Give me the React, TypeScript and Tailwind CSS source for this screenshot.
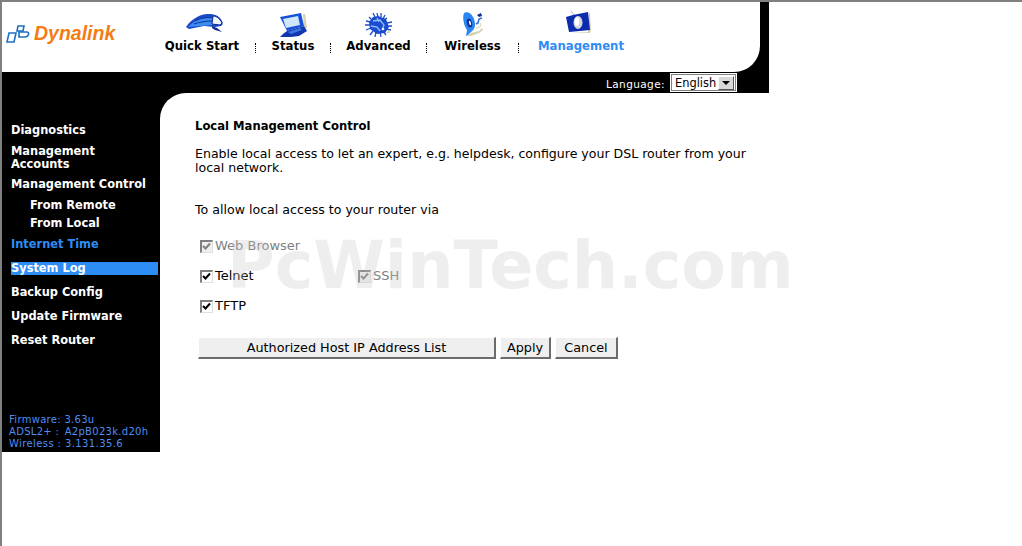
import { FunctionComponent, ReactNode } from "react";

const font = "font-['DejaVu_Sans',sans-serif]";

const QuickStartIcon = () => (
  <svg className="mb-[4px] ml-[5px]" width="38" height="20" viewBox="0 0 38 20">
    <path d="M0 14C4 8 11 2 21 1c7-.5 13 2 15 7 1 2 1 4-1 5l-6 1-11-1-10 2-5 1z" fill="#1a49c8" />
    <path d="M2 14C6 10 10 7 16 5l13-1-3 8-10 1z" fill="#3d8df0" />
    <path d="M9 8c6-3 12-4 18-3M8 11c6-2 12-3 18-3" stroke="#0f2f9c" strokeWidth="1" fill="none" />
    <path d="M27 3c4 0 7 3 9 7l-2 2-8-1z" fill="#f0f3fa" stroke="#0d2a8c" strokeWidth="1" />
    <path d="M26 13l5 2 5 4-7-2-3-2z" fill="#10308f" />
  </svg>
);

const StatusIcon = () => (
  <svg width="28" height="24" viewBox="0 0 28 24">
    <path d="M24 1l2 0 2 14-3 0z" fill="#d8d0ae" />
    <path d="M1 4L22 0l3 13-17 5z" fill="#1650d8" />
    <path d="M4 6l15-3 2 9-14 3z" fill="#cfe6fb" />
    <path d="M8 18l17-5 3 5-8 5-8 1H1l3-3z" fill="#1237b0" />
    <path d="M9 19l12-4 2 2-11 4z" fill="#3d78e0" />
  </svg>
);

const AdvancedIcon = () => (
  <svg width="27" height="24" viewBox="0 0 27 24">
    <g stroke="#1d4fc8" strokeWidth="1.300">
      <path d="M8 0l2 4M12 0l1 4M16 0l0 4M20 2l-2 4M22 5l-3 2M27 9l-5 1M27 13l-5 0M26 17l-5-1M21 22l-3-4M16 24l-1-5M10 24l1-5M5 22l3-4M1 17l5-2M0 12l5 0M1 8l5 1M4 4l3 3" />
    </g>
    <path d="M13 3l8 3 3 8-4 6-8 1-7-5-1-7 4-5z" fill="#1a4bd0" />
    <path d="M8 8l7-1 4 5-2 5M6 13l6 1 3 4M12 5l2 4" stroke="#8fc0f8" strokeWidth="1.300" fill="none" />
    <circle cx="18" cy="16" r="1.300" fill="#e8eef8" />
    <path d="M21 20l3-3 1 3z" fill="#d8d0ae" />
  </svg>
);

const WirelessIcon = () => (
  <svg width="22" height="25" viewBox="0 0 22 25">
    <path d="M5 24l4-3 8-2 3-3 1 2-4 3-8 3z" fill="#d8d0ae" />
    <path d="M2 1c4-2 8 1 10 6 2 5 1 10-2 12l-4 4-2 1 1-6C2 14 0 6 2 1z" fill="#2a86f2" />
    <ellipse cx="7.500" cy="11" rx="2.500" ry="4.500" transform="rotate(-15 7.500 11)" fill="#0f2b96" />
    <ellipse cx="8" cy="11" rx="1" ry="2.300" transform="rotate(-15 8 11)" fill="#f2f5fb" />
    <path d="M14 12l2-1 1-4 3-1" stroke="#2a6fd8" strokeWidth="1.500" fill="none" />
    <path d="M15 3l4-2 1 3-3 1z" fill="#0f2b96" />
    <path d="M14 16l4-1 1-4" stroke="#e4dfc4" strokeWidth="1.300" fill="none" />
  </svg>
);

const ManagementIcon = () => (
  <svg className="mb-[3px] mr-[5px]" width="25" height="23" viewBox="0 0 25 23">
    <path d="M5 0l3 4" stroke="#9ab2e0" strokeWidth="1" />
    <path d="M3 21l21 1 1-3-1-17h-1l-1 19z" fill="#d8d0ae" />
    <path d="M0 6l7-2 15-3 2 18-10 1-11 1z" fill="#0c2cb0" />
    <ellipse cx="12" cy="11.500" rx="4.500" ry="6.500" fill="#d6d9e0" />
    <ellipse cx="11" cy="10.500" rx="2.200" ry="4.200" fill="#ffffff" />
  </svg>
);

const Logo = () => (
  <div className="flex items-center gap-[4px]">
    <svg width="24" height="20" viewBox="0 0 24 20" fill="none" stroke="#1f6fc4" strokeWidth="1.600">
      <path d="M3 9h7l-2 9H1z" />
      <path d="M12 2h6l-1 5h-6z" />
      <path d="M13 8h8c1 0 2 1 1.500 2.500S21 13 19 13h-6z" />
    </svg>
    <span className="font-['Liberation_Sans',sans-serif] text-[19.500px] font-bold italic leading-none text-[#f47c14]">
      Dynalink
    </span>
  </div>
);

const NavItem: FunctionComponent<{ icon: ReactNode; label: string; active?: boolean; width: string }> = ({
  icon,
  label,
  active,
  width,
}) => (
  <div className={`flex flex-col items-center ${width}`}>
    <div className="flex h-[33px] items-end justify-center pb-[1px]">{icon}</div>
    <span
      className={`whitespace-nowrap text-[11.700px] font-bold leading-[16px] ${
        active ? "text-[#2e8cf5]" : "text-black"
      }`}
    >
      {label}
    </span>
  </div>
);

const NavDivider = () => <div className="mb-[1px] h-[10px] w-0 self-end border-l border-dotted border-black" />;

const SideItem: FunctionComponent<{ children: ReactNode; className?: string }> = ({ children, className }) => (
  <div className={`text-[11.400px] font-bold leading-[13px] text-white ${className ?? ""}`}>{children}</div>
);

const Check: FunctionComponent<{ disabled?: boolean }> = ({ disabled }) => (
  <span
    className={`relative block h-[13px] w-[13px] shrink-0 border-t-2 border-l-2 border-b border-r border-t-[#808080] border-l-[#808080] border-b-[#dfdfdf] border-r-[#dfdfdf] ${
      disabled ? "bg-[#efefef]" : "bg-white"
    }`}
  >
    <svg className="absolute left-0 top-0" width="9" height="9" viewBox="0 0 9 9">
      <path d="M1 4l2.500 2.500L8 1.500" fill="none" stroke={disabled ? "#808080" : "#000"} strokeWidth="2" />
    </svg>
  </span>
);

const CheckRow: FunctionComponent<{ label: string; disabled?: boolean; className?: string }> = ({
  label,
  disabled,
  className,
}) => (
  <label className={`flex items-center gap-[2px] ${className ?? ""}`}>
    <Check disabled={disabled} />
    <span className={`text-[13px] leading-[16px] ${disabled ? "text-[#808080]" : "text-black"}`}>{label}</span>
  </label>
);

const Btn: FunctionComponent<{ children: ReactNode; className?: string }> = ({ children, className }) => (
  <button
    className={`h-[22px] border-t border-l border-b-2 border-r-2 border-t-white border-l-white border-b-[#6b6b6b] border-r-[#6b6b6b] bg-[#efefef] pt-[2px] text-[12.800px] leading-none text-black ${className ?? ""}`}
  >
    {children}
  </button>
);

export default function App() {
  return (
    <div className={`${font} relative min-h-[546px] overflow-hidden border-l-2 border-t-2 border-[#808080] bg-white`}>
      <div className="w-[767px] bg-black">
        {/* top bar */}
        <div className="mr-[9px] flex h-[70px] items-start rounded-br-[26px] bg-white">
          <div className="ml-[4px] mt-[22px] w-[143px]">
            <Logo />
          </div>
          <div className="mt-[3px] flex">
            <NavItem icon={<QuickStartIcon />} label="Quick Start" width="w-[106px]" />
            <NavDivider />
            <NavItem icon={<StatusIcon />} label="Status" width="w-[74px]" />
            <NavDivider />
            <NavItem icon={<AdvancedIcon />} label="Advanced" width="w-[95px]" />
            <NavDivider />
            <NavItem icon={<WirelessIcon />} label="Wireless" width="w-[91px]" />
            <NavDivider />
            <NavItem icon={<ManagementIcon />} label="Management" active width="w-[124px]" />
          </div>
        </div>
        {/* language */}
        <div className="flex h-[21px] items-center justify-end pr-[32px]">
          <span className="mr-[5px] mt-[5px] text-[10.500px] tracking-[0.4px] text-white">Language:</span>
          <div className="flex h-[19px] w-[67px] items-center border-2 border-white bg-white outline outline-1 outline-[#808080] -outline-offset-2">
            <span className="flex-1 pl-[3px] pt-[2px] text-[11.400px] leading-none text-black">English</span>
            <span className="mr-[1px] flex h-[14px] w-[16px] items-center justify-center border-t border-l border-b border-r border-t-white border-l-white border-b-[#555] border-r-[#555] bg-[#d8d8d8]">
              <span className="h-0 w-0 border-x-[4px] border-t-[4px] border-x-transparent border-t-black" />
            </span>
          </div>
        </div>
      </div>

      <div className="flex w-[767px]">
        {/* sidebar */}
        <div className="w-[158px] shrink-0 bg-black">
          <div className="flex h-[359px] flex-col pl-[9px]">
            <SideItem className="mt-[31px]">Diagnostics</SideItem>
            <SideItem className="mt-[8px]">
              Management
              <br />
              Accounts
            </SideItem>
            <SideItem className="mt-[7px]">Management Control</SideItem>
            <SideItem className="ml-[19px] mt-[8px]">From Remote</SideItem>
            <SideItem className="ml-[19px] mt-[5px]">From Local</SideItem>
            <SideItem className="mt-[8px] !text-[#2e8cf5]">Internet Time</SideItem>
            <SideItem className="mr-[2px] mt-[11px] bg-[#2e8cf5]">System Log</SideItem>
            <SideItem className="mt-[11px]">Backup Config</SideItem>
            <SideItem className="mt-[11px]">Update Firmware</SideItem>
            <SideItem className="mt-[11px]">Reset Router</SideItem>
            <div className="mt-auto mb-[2px] -ml-[2px] text-[10px] leading-[12px] tracking-[0.3px] text-[#4f8ef0]">
              <div>Firmware: 3.63u</div>
              <div>
                ADSL2+ : <span className="ml-[2px]">A2pB023k.d20h</span>
              </div>
              <div className="tracking-[0.4px]">Wireless : 3.131.35.6</div>
            </div>
          </div>
        </div>

        {/* content */}
        <div className="relative flex-1 bg-black">
          <div className="h-[359px] rounded-tl-[26px] bg-white pl-[35px] pt-[25px]">
            <h1 className="text-[11.600px] font-bold leading-[16px] text-black">Local Management Control</h1>
            <p className="mt-[13px] w-[556px] text-[12.550px] leading-[14px] text-black">
              Enable local access to let an expert, e.g. helpdesk, configure your DSL router from your local network.
            </p>
            <p className="mt-[28px] text-[12.600px] leading-[14px] text-black">
              To allow local access to your router via
            </p>
            <div className="mt-[21px] flex flex-col gap-[14px] pl-[5px]">
              <CheckRow label="Web Browser" disabled />
              <div className="flex">
                <CheckRow label="Telnet" className="w-[158px]" />
                <CheckRow label="SSH" disabled />
              </div>
              <CheckRow label="TFTP" />
            </div>
            <div className="mt-[23px] flex gap-[4px] pl-[3px]">
              <Btn className="w-[298px]">Authorized Host IP Address List</Btn>
              <Btn className="w-[51px]">Apply</Btn>
              <Btn className="w-[63px]">Cancel</Btn>
            </div>
          </div>
        </div>
      </div>

      {/* watermark */}
      <div className="pointer-events-none absolute left-[225px] top-[228px] whitespace-nowrap text-[65px] font-bold leading-[72px] text-[#c8c8c8]/30">
        PcWinTech.com
      </div>
    </div>
  );
}
